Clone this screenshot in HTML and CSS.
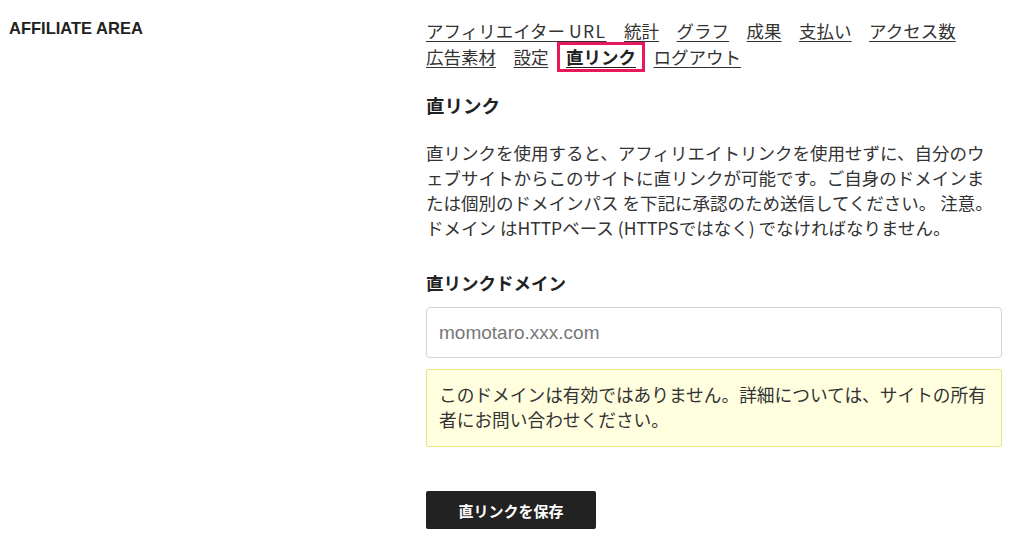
FILE: index.html
```html
<!DOCTYPE html>
<html lang="ja">
<head>
<meta charset="utf-8">
<title>Affiliate Area</title>
<link rel="stylesheet" href="styles.css">
</head>
<body>
<div class="page">
  <aside class="side">
    <h2 class="side-title">AFFILIATE AREA</h2>
  </aside>
  <main class="content">
    <nav class="tabs">
      <a href="#" class="tab">アフィリエイター <span class="tab-latin">URL</span></a>
      <a href="#" class="tab">統計</a>
      <a href="#" class="tab">グラフ</a>
      <a href="#" class="tab">成果</a>
      <a href="#" class="tab">支払い</a>
      <a href="#" class="tab">アクセス数</a>
      <a href="#" class="tab">広告素材</a>
      <a href="#" class="tab">設定</a>
      <a href="#" class="tab tab-active">直リンク</a>
      <a href="#" class="tab">ログアウト</a>
    </nav>
    <h3 class="section-title">直リンク</h3>
    <p class="desc">直リンクを使用すると、アフィリエイトリンクを使用せずに、自分のウ<br>ェブサイトからこのサイトに直リンクが可能です。ご自身のドメインま<br>たは個別のドメインパス を下記に承認のため送信してください。 注意。<br>ドメイン はHTTPベース (HTTPSではなく) でなければなりません。</p>
    <label class="field-label" for="domain">直リンクドメイン</label>
    <input id="domain" class="field-input" type="text" placeholder="momotaro.xxx.com">
    <div class="notice">このドメインは有効ではありません。詳細については、サイトの所有者にお問い合わせください。</div>
    <button class="save-btn" type="button">直リンクを保存</button>
  </main>
</div>
</body>
</html>
```

FILE: styles.css
```css
html, body {
  margin: 0;
  padding: 0;
  background: #fff;
}
body {
  font-family: "Noto Sans CJK JP", "Noto Sans", sans-serif;
  color: #333;
  text-spacing-trim: space-all;
  font-feature-settings: "chws" 0, "halt" 0;
  line-break: loose;
}
.page {
  display: flex;
  align-items: flex-start;
}
.side {
  width: 426px;
  padding-left: 9px;
  box-sizing: border-box;
  flex: none;
}
.side-title {
  margin: 18px 0 0;
  font-family: "Liberation Sans", Arial, sans-serif;
  font-size: 16.5px;
  line-height: 20px;
  font-weight: bold;
  color: #222;
}
.content {
  width: 576px;
  flex: none;
  padding-top: 18px;
}
.tabs {
  display: flex;
  flex-wrap: wrap;
  column-gap: 17.5px;
  font-size: 17.5px;
  line-height: 26px;
}
.tab {
  color: #333;
  text-decoration: underline;
  text-underline-offset: 3px;
  text-decoration-thickness: 1px;
  white-space: nowrap;
}
.tab-latin {
  letter-spacing: 1.5px;
}
.tab-active {
  font-weight: bold;
  color: #222;
  line-height: 24px;
  padding: 0 6px;
  margin: -2px -9px;
  border: 3px solid #e8195a;
}
.section-title {
  margin: 22px 0 0;
  font-size: 18.5px;
  line-height: 26px;
  font-weight: bold;
  color: #222;
}
.desc {
  margin: 22px 0 0;
  font-size: 17.5px;
  line-height: 25px;
  color: #333;
}
.field-label {
  display: block;
  margin-top: 30px;
  font-size: 17.5px;
  line-height: 26px;
  font-weight: bold;
  color: #222;
}
.field-input {
  display: block;
  box-sizing: border-box;
  width: 576px;
  height: 51px;
  margin-top: 11px;
  padding: 0 12px;
  border: 1px solid #d4d4d4;
  border-radius: 4px;
  font-family: "Liberation Sans", Arial, sans-serif;
  font-size: 19px;
  color: #333;
}
.field-input::placeholder {
  color: #777;
}
.notice {
  box-sizing: border-box;
  margin-top: 11px;
  padding: 12px 12px 14px 12px;
  background: #ffffe0;
  border: 1px solid #ede38a;
  border-radius: 2px;
  font-size: 17.7px;
  line-height: 25px;
  color: #333;
}
.save-btn {
  display: block;
  margin-top: 44px;
  width: 170px;
  height: 38px;
  border: none;
  border-radius: 2px;
  background: #222;
  color: #fff;
  font-family: "Noto Sans CJK JP", sans-serif;
  font-size: 15px;
  font-weight: bold;
  cursor: pointer;
}
```
